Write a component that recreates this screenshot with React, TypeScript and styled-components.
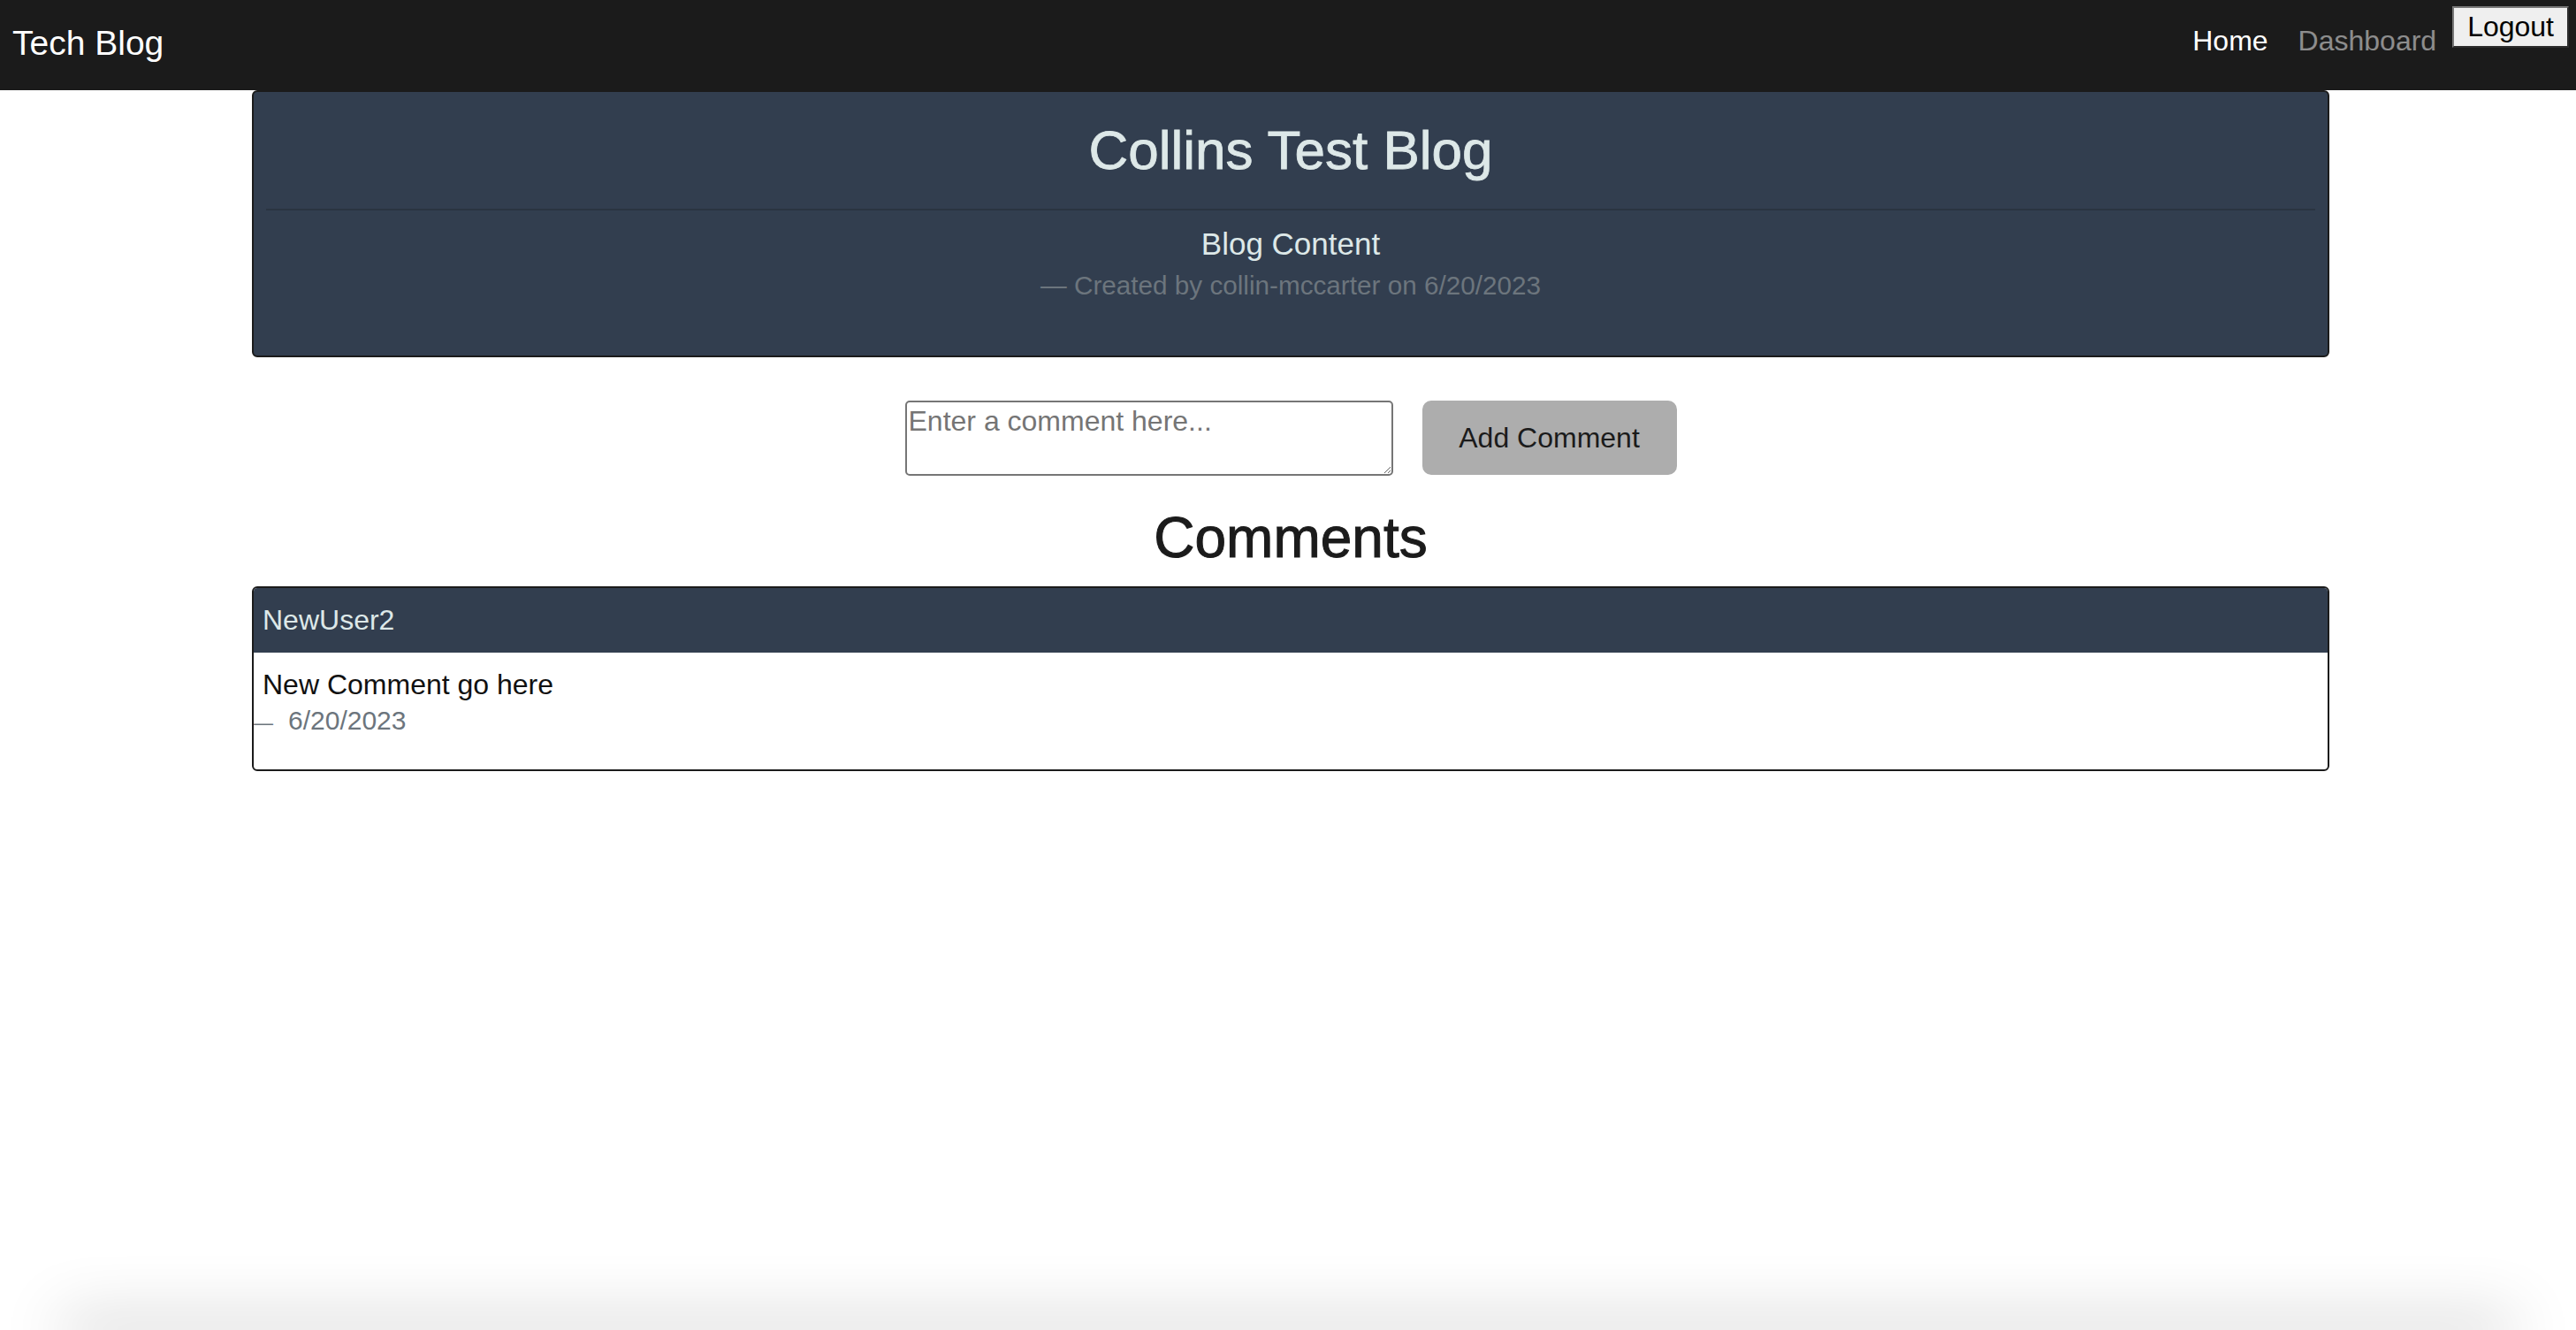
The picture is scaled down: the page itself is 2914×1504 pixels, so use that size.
import React from "react";
import styled, { createGlobalStyle } from "styled-components";

const GlobalStyle = createGlobalStyle`
  html, body {
    margin: 0;
    padding: 0;
    background: #ffffff;
  }
  body {
    font-family: "Liberation Sans", Arial, sans-serif;
  }
  * {
    box-sizing: border-box;
  }
`;

const Page = styled.div`
  min-height: 100vh;
  display: flex;
  flex-direction: column;
`;

const Navbar = styled.header`
  display: flex;
  align-items: flex-start;
  justify-content: space-between;
  height: 102px;
  padding: 0 8px 0 14px;
  background: #1b1b1b;
`;

const Brand = styled.a`
  margin-top: 26px;
  font-size: 39px;
  line-height: 45px;
  color: #ffffff;
  text-decoration: none;
`;

const NavGroup = styled.nav`
  display: flex;
  align-items: flex-start;
  gap: 2px;
  padding-top: 7px;
`;

const NavLink = styled.a<{ $active?: boolean }>`
  padding: 21px 16px 0;
  font-size: 32px;
  line-height: 37px;
  color: ${(p) => (p.$active ? "#ffffff" : "rgba(255,255,255,0.5)")};
  text-decoration: none;
`;

const LogoutButton = styled.button`
  margin: 0;
  padding: 3px 15px;
  font-family: "Liberation Sans", Arial, sans-serif;
  font-size: 32px;
  line-height: 37px;
  color: #000000;
  background: #efefef;
  border-width: 2px;
  border-style: solid;
  border-color: #777777 #2c2c2c #2c2c2c #777777;
  border-radius: 0;
`;

const Main = styled.main`
  width: 2350px;
  margin-left: calc(50% - 1172px);
  display: flex;
  flex-direction: column;
`;

const PostCard = styled.article`
  background: #323e4f;
  border: 2px solid #1b1b1b;
  border-radius: 6px;
`;

const PostHeader = styled.div`
  margin: 0 14px;
  padding: 29px 0;
  border-bottom: 2px solid #2a3441;
  text-align: center;
`;

const PostTitle = styled.h1`
  margin: 0;
  font-size: 62px;
  line-height: 74px;
  font-weight: 400;
  color: #dde8e8;
  -webkit-text-stroke: 0.8px #dde8e8;
`;

const PostBody = styled.div`
  padding: 17px 14px 61px;
  text-align: center;
`;

const PostContent = styled.p`
  margin: 0;
  font-size: 35px;
  line-height: 42px;
  color: #dde8e8;
`;

const PostMeta = styled.p`
  margin: 8px 0 0;
  font-size: 29.7px;
  line-height: 36px;
  color: #6c757d;
`;

const CommentForm = styled.form`
  display: flex;
  justify-content: center;
  align-items: flex-start;
  gap: 33px;
  margin-top: 49px;
`;

const CommentInput = styled.textarea`
  width: 552px;
  height: 85px;
  margin: 0;
  padding: 3px 2px;
  border: 2px solid #767676;
  border-radius: 5px;
  font-family: "Liberation Sans", Arial, sans-serif;
  font-size: 32px;
  line-height: 37px;
  color: #000000;
  &::placeholder {
    color: #757575;
  }
`;

const AddButton = styled.button`
  width: 288px;
  height: 84px;
  margin: 0;
  padding: 0;
  border: none;
  border-radius: 10px;
  background: #adadad;
  font-family: "Liberation Sans", Arial, sans-serif;
  font-size: 32px;
  color: #1b1b1b;
`;

const SectionTitle = styled.h2`
  margin: 32px 0 17px;
  text-align: center;
  font-size: 64px;
  line-height: 76px;
  font-weight: 400;
  color: #1b1b1b;
  -webkit-text-stroke: 1px #1b1b1b;
`;

const CommentCard = styled.article`
  border: 2px solid #1b1b1b;
  border-radius: 6px;
  overflow: hidden;
  background: #ffffff;
`;

const CommentHeader = styled.div`
  padding: 17px 10px 18px;
  background: #323e4f;
  font-size: 32px;
  line-height: 38px;
  color: #dde8e8;
`;

const CommentBody = styled.div`
  padding: 17px 10px 34px;
`;

const CommentText = styled.p`
  margin: 0;
  font-size: 32px;
  line-height: 38px;
  color: #111111;
`;

const CommentFooter = styled.p`
  margin: 4px 0 0 -10px;
  font-size: 30px;
  line-height: 36px;
  color: #6c757d;
`;

const Dash = styled.span`
  font-size: 22px;
  margin-right: 17px;
`;

const BottomShade = styled.div`
  margin: auto 80px 0;
  height: 0;
  box-shadow: 0 0 70px 10px rgba(0, 0, 0, 0.3);
`;

export default function App() {
  return (
    <>
      <GlobalStyle />
      <Page>
        <Navbar>
          <Brand href="#">Tech Blog</Brand>
          <NavGroup>
            <NavLink href="#" $active>
              Home
            </NavLink>
            <NavLink href="#">Dashboard</NavLink>
            <LogoutButton type="button">Logout</LogoutButton>
          </NavGroup>
        </Navbar>
        <Main>
          <PostCard>
            <PostHeader>
              <PostTitle>Collins Test Blog</PostTitle>
            </PostHeader>
            <PostBody>
              <PostContent>Blog Content</PostContent>
              <PostMeta>— Created by collin-mccarter on 6/20/2023</PostMeta>
            </PostBody>
          </PostCard>
          <CommentForm onSubmit={(e) => e.preventDefault()}>
            <CommentInput placeholder="Enter a comment here..." />
            <AddButton type="submit">Add Comment</AddButton>
          </CommentForm>
          <SectionTitle>Comments</SectionTitle>
          <CommentCard>
            <CommentHeader>NewUser2</CommentHeader>
            <CommentBody>
              <CommentText>New Comment go here</CommentText>
              <CommentFooter>
                <Dash>—</Dash>6/20/2023
              </CommentFooter>
            </CommentBody>
          </CommentCard>
        </Main>
        <BottomShade />
      </Page>
    </>
  );
}
